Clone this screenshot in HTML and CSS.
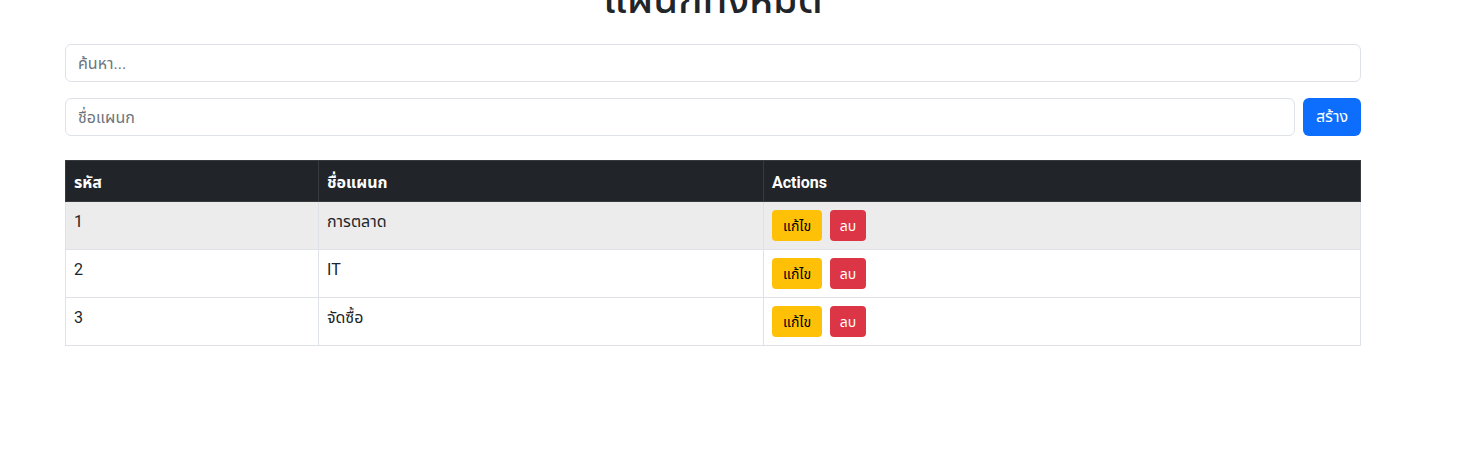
FILE: index.html
```html
<!DOCTYPE html>
<html lang="th">
<head>
<meta charset="utf-8">
<title>แผนกทั้งหมด</title>
<link rel="stylesheet" href="styles.css">
</head>
<body>
<div class="container">
  <h2 class="title">แผนกทั้งหมด</h2>
  <input class="form-control search" type="text" placeholder="ค้นหา...">
  <div class="create-row">
    <input class="form-control" type="text" placeholder="ชื่อแผนก">
    <button class="btn btn-primary">สร้าง</button>
  </div>
  <table class="table">
    <thead>
      <tr><th class="c1">รหัส</th><th class="c2">ชื่อแผนก</th><th>Actions</th></tr>
    </thead>
    <tbody>
      <tr class="striped"><td>1</td><td>การตลาด</td><td><button class="btn btn-sm btn-warning">แก้ไข</button><button class="btn btn-sm btn-danger">ลบ</button></td></tr>
      <tr><td>2</td><td>IT</td><td><button class="btn btn-sm btn-warning">แก้ไข</button><button class="btn btn-sm btn-danger">ลบ</button></td></tr>
      <tr><td>3</td><td>จัดซื้อ</td><td><button class="btn btn-sm btn-warning">แก้ไข</button><button class="btn btn-sm btn-danger">ลบ</button></td></tr>
    </tbody>
  </table>
</div>
</body>
</html>
```
FILE: styles.css
```css
* { box-sizing: border-box; }
html, body { margin: 0; padding: 0; background: #fff; }
body {
  font-family: "Segoe UI", Roboto, "Noto Sans Thai", "Noto Sans", sans-serif;
  font-size: 16px;
  line-height: 1.5;
  color: #212529;
  overflow: hidden;
}
.container {
  width: 1296px;
  margin-left: 65px;
}
.title {
  margin: -22px 0 22px;
  height: 44px;
  font-size: 40px;
  font-weight: 500;
  line-height: 44px;
  text-align: center;
  color: #212529;
}
.form-control {
  display: block;
  width: 100%;
  height: 38px;
  padding: 6px 12px;
  font: inherit;
  font-size: 16px;
  color: #212529;
  background: #fff;
  border: 1px solid #dee2e6;
  border-radius: 6px;
  outline: none;
}
.form-control::placeholder { color: #6c757d; }
.search { margin-bottom: 16px; }
.create-row {
  display: flex;
  gap: 8px;
  margin-bottom: 24px;
}
.create-row .form-control { flex: 1; }
.btn {
  font: inherit;
  border: 1px solid transparent;
  border-radius: 6px;
  cursor: pointer;
}
.btn-primary {
  width: 58px;
  height: 38px;
  padding: 0;
  background: #0d6efd;
  color: #fff;
  font-size: 16px;
  flex: none;
}
.btn-sm {
  height: 31px;
  padding: 0;
  font-size: 14px;
  border-radius: 4px;
  margin-right: 8px;
  vertical-align: top;
}
.btn-warning { width: 50px; background: #ffc107; color: #000; }
.btn-danger { width: 36px; background: #dc3545; color: #fff; }
.table {
  width: 100%;
  border-collapse: collapse;
  table-layout: fixed;
}
.table th, .table td {
  border: 1px solid #dee2e6;
  padding: 8px;
  text-align: left;
  vertical-align: top;
  line-height: 24px;
}
.table th {
  background: #212529;
  color: #fff;
  border-color: #373b3e;
  font-weight: 700;
  height: 41px;
  padding-top: 10px;
  padding-bottom: 6px;
}
.table td { height: 48px; }
.c1 { width: 253px; }
.c2 { width: 445px; }
.striped td { background: #ececec; }
```
